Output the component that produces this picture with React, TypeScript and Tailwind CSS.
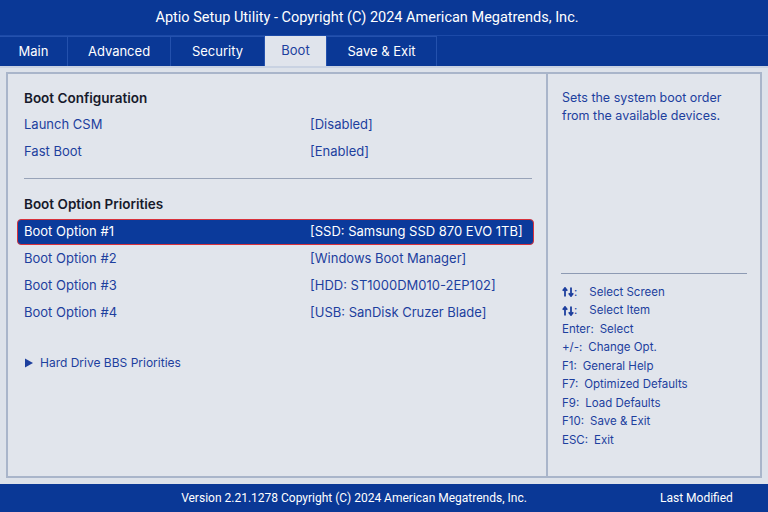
import React from "react";

const tabs = [
  { label: "Main", w: "w-[68px]" },
  { label: "Advanced", w: "w-[103px]" },
  { label: "Security", w: "w-[94px]" },
  { label: "Boot", w: "w-[62px]", active: true },
  { label: "Save & Exit", w: "w-[110px]" },
];

const keys: [string, string][] = [
  ["arrows", "Select Screen"],
  ["arrows", "Select Item"],
  ["Enter:", "Select"],
  ["+/-:", "Change Opt."],
  ["F1:", "General Help"],
  ["F7:", "Optimized Defaults"],
  ["F9:", "Load Defaults"],
  ["F10:", "Save & Exit"],
  ["ESC:", "Exit"],
];

function Arrows() {
  return (
    <span className="flex items-center mr-[12px]">
      <svg width="12" height="10" viewBox="0 0 12 10">
        <path d="M3 9.5 V1.5 M0.8 3.8 L3 1 L5.2 3.8" stroke="#1d3f9e" strokeWidth="1.8" fill="none" />
        <path d="M9 0.5 V8.5 M6.8 6.2 L9 9 L11.2 6.2" stroke="#1d3f9e" strokeWidth="1.8" fill="none" />
      </svg>
      <span>:</span>
    </span>
  );
}

function Row({ label, value, selected }: { label: string; value: string; selected?: boolean }) {
  if (selected) {
    return (
      <div className="h-[27px] flex items-center">
        <div className="h-[26px] w-[517px] ml-[9px] flex items-center bg-[#0b3a9b] border-[1.5px] border-[#d8323c] rounded-[4px] text-white">
          <span className="pl-[6px] w-[292px]">{label}</span>
          <span>{value}</span>
        </div>
      </div>
    );
  }
  return (
    <div className="h-[27px] flex items-center text-[#1d3f9e]">
      <span className="pl-[16px] w-[302px]">{label}</span>
      <span>{value}</span>
    </div>
  );
}

export default function App() {
  return (
    <div
      className="w-[768px] h-[512px] flex flex-col bg-[#0a3896] overflow-hidden"
      style={{ fontFamily: "Inter, 'Liberation Sans', sans-serif" }}
    >
      <div
        className="h-[36px] flex items-center justify-center pr-[34px] text-white text-[14.5px] border-b border-[#1c4aa8]"
        style={{ fontFamily: "Roboto, 'Liberation Sans', sans-serif" }}
      >
        Aptio Setup Utility - Copyright (C) 2024 American Megatrends, Inc.
      </div>
      <div className="h-[30px] flex text-[13px]">
        {tabs.map((t) => (
          <div
            key={t.label}
            className={`${t.w} flex items-center justify-center border-r border-[#2451ad] ${
              t.active ? "bg-[#e0e4ec] text-[#1d3f9e]" : "text-white border-t border-[#2c58b4]"
            }`}
          >
            {t.label}
          </div>
        ))}
      </div>
      <div className="flex-1 bg-[#dde2ea] px-[6px] pt-[4px] pb-[6px] border-t-2 border-[#c9d2e2]">
        <div className="h-full flex border-2 border-[#a9b5ca] bg-[#e1e5ec] text-[13px]">
          <div className="w-[540px] border-r-2 border-[#a9b5ca] pt-[12px] flex flex-col">
            <div className="h-[25px] flex items-center pl-[16px] font-semibold text-[#171a2b] text-[13.5px]">
              Boot Configuration
            </div>
            <Row label="Launch CSM" value="[Disabled]" />
            <Row label="Fast Boot" value="[Enabled]" />
            <div className="ml-[16px] w-[508px] h-px bg-[#98a3b8] mt-[13px]" />
            <div className="mt-[11px] h-[28px] flex items-center pl-[16px] font-semibold text-[#171a2b] text-[13.5px]">
              Boot Option Priorities
            </div>
            <Row label="Boot Option #1" value="[SSD: Samsung SSD 870 EVO 1TB]" selected />
            <Row label="Boot Option #2" value="[Windows Boot Manager]" />
            <Row label="Boot Option #3" value="[HDD: ST1000DM010-2EP102]" />
            <Row label="Boot Option #4" value="[USB: SanDisk Cruzer Blade]" />
            <div className="mt-[23px] h-[27px] flex items-center pl-[16px] text-[#1d3f9e] text-[12px]">
              <svg width="10" height="10" viewBox="0 0 10 10" className="mr-[6px]">
                <path d="M1 0.5 L9 5 L1 9.5 Z" fill="#1d3f9e" />
              </svg>
              Hard Drive BBS Priorities
            </div>
          </div>
          <div className="flex-1 flex flex-col pt-[15px] pl-[14px] pr-[12px] text-[#1d3f9e]">
            <div className="text-[12.5px] leading-[18px]">
              Sets the system boot order
              <br />
              from the available devices.
            </div>
            <div className="mt-[148px] h-px bg-[#8d9ab3] w-[186px] -ml-[1px]" />
            <div className="mt-[9px] flex flex-col text-[11.5px]">
              {keys.map(([k, v], i) => (
                <div key={i} className="h-[18.5px] flex items-center">
                  {k === "arrows" ? <Arrows /> : <span className="mr-[6px]">{k}</span>}
                  <span>{v}</span>
                </div>
              ))}
            </div>
          </div>
        </div>
      </div>
      <div
        className="h-[28px] flex items-center text-white text-[12px] bg-[#0a3896]"
        style={{ fontFamily: "Roboto, 'Liberation Sans', sans-serif" }}
      >
        <div className="w-[660px] pl-[48px] text-center">
          Version 2.21.1278 Copyright (C) 2024 American Megatrends, Inc.
        </div>
        <div>Last Modified</div>
      </div>
    </div>
  );
}
